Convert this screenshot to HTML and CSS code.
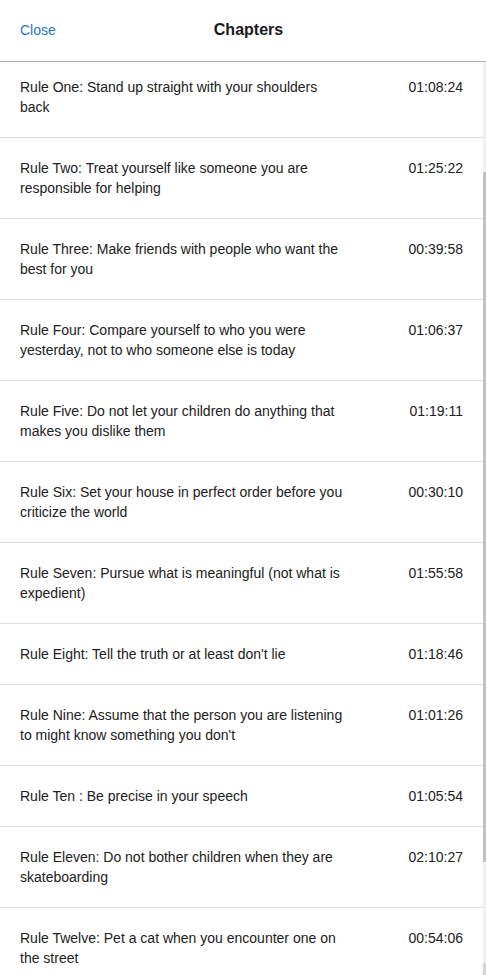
FILE: index.html
```html
<!DOCTYPE html>
<html lang="en">
<head>
<meta charset="utf-8">
<title>Chapters</title>
<link rel="stylesheet" href="styles.css">
</head>
<body>
<div class="sheet">
  <header class="header">
    <a class="close" href="#">Close</a>
    <h1 class="title">Chapters</h1>
    <span class="spacer"></span>
  </header>
  <div class="body">
    <ul class="list">
      <li class="row first"><span class="name">Rule One: Stand up straight with your shoulders back</span><span class="time">01:08:24</span></li>
      <li class="row"><span class="name">Rule Two: Treat yourself like someone you are responsible for helping</span><span class="time">01:25:22</span></li>
      <li class="row"><span class="name">Rule Three: Make friends with people who want the best for you</span><span class="time">00:39:58</span></li>
      <li class="row"><span class="name">Rule Four: Compare yourself to who you were yesterday, not to who someone else is today</span><span class="time">01:06:37</span></li>
      <li class="row"><span class="name">Rule Five: Do not let your children do anything that makes you dislike them</span><span class="time">01:19:11</span></li>
      <li class="row"><span class="name">Rule Six: Set your house in perfect order before you criticize the world</span><span class="time">00:30:10</span></li>
      <li class="row"><span class="name">Rule Seven: Pursue what is meaningful (not what is expedient)</span><span class="time">01:55:58</span></li>
      <li class="row"><span class="name">Rule Eight: Tell the truth or at least don't lie</span><span class="time">01:18:46</span></li>
      <li class="row"><span class="name">Rule Nine: Assume that the person you are listening to might know something you don't</span><span class="time">01:01:26</span></li>
      <li class="row"><span class="name">Rule Ten : Be precise in your speech</span><span class="time">01:05:54</span></li>
      <li class="row"><span class="name">Rule Eleven: Do not bother children when they are skateboarding</span><span class="time">02:10:27</span></li>
      <li class="row"><span class="name">Rule Twelve: Pet a cat when you encounter one on the street</span><span class="time">00:54:06</span></li>
    </ul>
    <div class="scrollbar">
      <div class="thumb"></div>
      <div class="arrow"></div>
    </div>
  </div>
</div>
</body>
</html>
```
FILE: styles.css
```css
* { box-sizing: border-box; }
html, body {
  margin: 0;
  padding: 0;
  background: #ffffff;
}
body {
  font-family: "Liberation Sans", Arial, sans-serif;
  font-size: 14px;
  color: #212121;
  overflow: hidden;
}
.sheet {
  height: 975px;
  display: flex;
  flex-direction: column;
  overflow: hidden;
}
.header {
  flex: none;
  height: 62px;
  border-bottom: 1px solid #b4b4b4;
  display: grid;
  grid-template-columns: 1fr auto 1fr;
  align-items: center;
  padding: 0 9px 0 20px;
}
.close {
  justify-self: start;
  color: #1f76c8;
  text-decoration: none;
  font-size: 14px;
  line-height: 20px;
  padding-bottom: 1px;
}
.title {
  margin: 0;
  font-size: 16px;
  font-weight: bold;
  line-height: 20px;
  color: #1a1a1a;
  padding-bottom: 1px;
}
.body {
  flex: 1;
  display: flex;
  min-height: 0;
  overflow: hidden;
}
.list {
  flex: 1;
  list-style: none;
  margin: 0;
  padding: 0;
}
.row {
  display: flex;
  justify-content: space-between;
  align-items: flex-start;
  padding: 20px 20px;
  border-bottom: 1px solid #dcdcdc;
  line-height: 20px;
}
.row.first {
  padding-top: 15px;
}
.name {
  width: 327px;
}
.time {
  flex: none;
  text-align: right;
}
.scrollbar {
  flex: none;
  width: 3px;
  background: #f1f1f1;
  display: flex;
  flex-direction: column;
}
.thumb {
  margin-top: 110px;
  height: 690px;
  background: #c1c1c1;
}
.arrow {
  margin-top: auto;
  height: 12px;
  background: #d4d4da;
}
```
